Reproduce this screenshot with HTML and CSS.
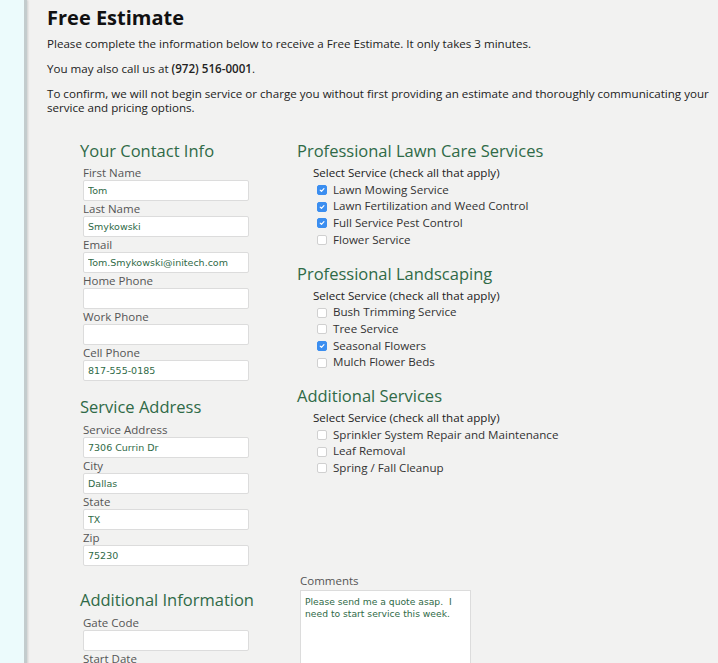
FILE: index.html
```html
<!DOCTYPE html>
<html lang="en">

<head>
    <meta charset="UTF-8">
    <meta name="viewport" content="width=device-width, initial-scale=1.0">
    <title>Free Estimate</title>
    <link rel="stylesheet" href="styles.css">
</head>

<body>
    <div class="side"></div>

    <main class="page">
        <h1 class="page-title">Free Estimate</h1>
        <p class="intro">Please complete the information below to receive a Free Estimate. It only takes 3 minutes.</p>
        <p class="intro">You may also call us at <strong>(972) 516-0001</strong>.</p>
        <p class="intro">To confirm, we will not begin service or charge you without first providing an estimate and thoroughly communicating your service and pricing options.</p>

        <form class="estimate-form">
            <div class="col-left">
                <h2 class="section-title">Your Contact Info</h2>
                <label class="field">First Name<input type="text" value="Tom"></label>
                <label class="field">Last Name<input type="text" value="Smykowski"></label>
                <label class="field">Email<input type="text" value="Tom.Smykowski@initech.com"></label>
                <label class="field">Home Phone<input type="text" value=""></label>
                <label class="field">Work Phone<input type="text" value=""></label>
                <label class="field">Cell Phone<input type="text" value="817-555-0185"></label>

                <h2 class="section-title address">Service Address</h2>
                <label class="field">Service Address<input type="text" value="7306 Currin Dr"></label>
                <label class="field">City<input type="text" value="Dallas"></label>
                <label class="field">State<input type="text" value="TX"></label>
                <label class="field">Zip<input type="text" value="75230"></label>
            </div>

            <div class="col-right">
                <h2 class="section-title">Professional Lawn Care Services</h2>
                <div class="service-group">
                    <div class="select-hint">Select Service (check all that apply)</div>
                    <label class="check"><span class="box checked"><svg viewBox="0 0 11 11"><path d="M3 5.7l1.8 1.8L8.2 3.6"/></svg></span>Lawn Mowing Service</label>
                    <label class="check"><span class="box checked"><svg viewBox="0 0 11 11"><path d="M3 5.7l1.8 1.8L8.2 3.6"/></svg></span>Lawn Fertilization and Weed Control</label>
                    <label class="check"><span class="box checked"><svg viewBox="0 0 11 11"><path d="M3 5.7l1.8 1.8L8.2 3.6"/></svg></span>Full Service Pest Control</label>
                    <label class="check"><span class="box"></span>Flower Service</label>
                </div>

                <h2 class="section-title spaced">Professional Landscaping</h2>
                <div class="service-group">
                    <div class="select-hint">Select Service (check all that apply)</div>
                    <label class="check"><span class="box"></span>Bush Trimming Service</label>
                    <label class="check"><span class="box"></span>Tree Service</label>
                    <label class="check"><span class="box checked"><svg viewBox="0 0 11 11"><path d="M3 5.7l1.8 1.8L8.2 3.6"/></svg></span>Seasonal Flowers</label>
                    <label class="check"><span class="box"></span>Mulch Flower Beds</label>
                </div>

                <h2 class="section-title spaced">Additional Services</h2>
                <div class="service-group">
                    <div class="select-hint">Select Service (check all that apply)</div>
                    <label class="check"><span class="box"></span>Sprinkler System Repair and Maintenance</label>
                    <label class="check"><span class="box"></span>Leaf Removal</label>
                    <label class="check"><span class="box"></span>Spring / Fall Cleanup</label>
                </div>
            </div>

            <div class="col-left">
                <h2 class="section-title extra">Additional Information</h2>
                <label class="field">Gate Code<input type="text" value=""></label>
                <label class="field">Start Date<input type="text" value=""></label>
            </div>

            <div class="col-right comments">
                <label class="comments-label">Comments
                    <textarea>Please send me a quote asap.  I need to start service this week.</textarea>
                </label>
            </div>
        </form>
    </main>
</body>

</html>
```

FILE: styles.css
```css
* {
    margin: 0;
    padding: 0;
    box-sizing: border-box;
    font-family: 'Open Sans', sans-serif;
}

body {
    background-color: #f2f2f1;
    display: flex;
    min-height: 663px;
    overflow: hidden;
}

.side {
    width: 27px;
    flex-shrink: 0;
    background-color: #ecfbfc;
    border-right: 3px solid #c3cccd;
    box-shadow: 1px 0 2px rgba(0, 0, 0, 0.15);
}

.page {
    flex: 1;
    padding: 6px 0 0 20px;
    color: #222;
}

.page-title {
    font-size: 20px;
    line-height: 24px;
    font-weight: 700;
    color: #111;
    margin-bottom: 7px;
}

.intro {
    font-size: 11.6px;
    line-height: 14px;
    margin-bottom: 11px;
}

.intro strong {
    font-weight: 600;
}

.estimate-form {
    display: grid;
    grid-template-columns: 217px 1fr;
    padding-left: 33px;
    margin-top: 26px;
}

.section-title {
    font-size: 16.5px;
    line-height: 20px;
    font-weight: 400;
    color: #2f6a47;
    margin-bottom: 4px;
}

.section-title.spaced {
    margin-top: 15px;
}

.section-title.address {
    margin-top: 16px;
    margin-bottom: 5px;
}

.section-title.extra {
    margin-top: 24px;
    margin-bottom: 5px;
}

.field {
    display: block;
    margin-left: 3px;
    font-size: 11.5px;
    line-height: 15px;
    color: #555;
}

.field input {
    display: block;
    width: 166px;
    height: 21px;
    padding: 0 4px;
    border: 1px solid #dcdcdc;
    border-radius: 2px;
    background-color: #fff;
    font-family: 'DejaVu Sans', sans-serif;
    font-size: 9.5px;
    color: #2f6a47;
    outline: none;
}

.service-group {
    padding-left: 16px;
    font-size: 11.6px;
    line-height: 16.7px;
    color: #333;
}

.select-hint {
    color: #222;
}

.check {
    display: flex;
    align-items: center;
    gap: 6px;
    padding-left: 4px;
}

.box {
    width: 10px;
    height: 10px;
    border: 1px solid #d0d0d0;
    border-radius: 2px;
    background-color: #fff;
    display: flex;
}

.box.checked {
    background-color: #3b8ef0;
    border-color: #3b8ef0;
}

.box svg {
    width: 8px;
    height: 8px;
    fill: none;
    stroke: #fff;
    stroke-width: 1.6;
    stroke-linecap: round;
    stroke-linejoin: round;
}

.comments {
    padding-top: 7px;
    padding-left: 3px;
}

.comments-label {
    display: block;
    font-size: 11.5px;
    line-height: 15px;
    color: #555;
}

.comments-label textarea {
    display: block;
    width: 171px;
    height: 100px;
    margin-top: 2px;
    padding: 5px 4px;
    border: 1px solid #dcdcdc;
    background-color: #fff;
    font-family: 'DejaVu Sans', sans-serif;
    font-size: 9.2px;
    line-height: 12px;
    color: #2f6a47;
    resize: none;
    outline: none;
}
```
